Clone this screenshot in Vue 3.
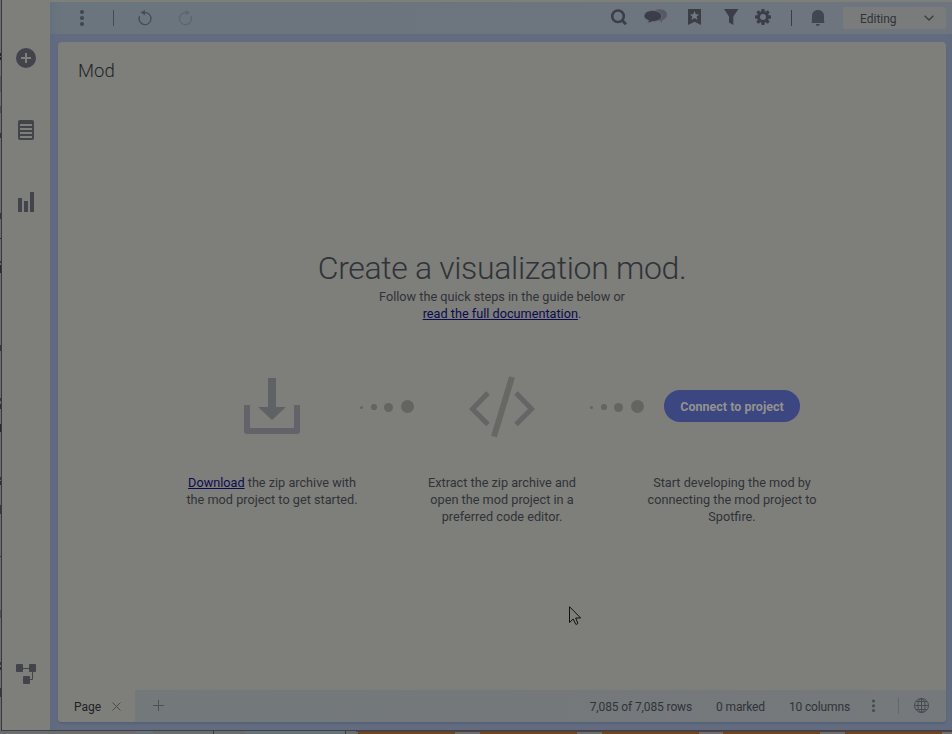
<script setup>
const marks = [
  [53, 3, 1], [57, 3, 1], [76, 16, .25], [106, 7, .4], [133, 5, .8], [213, 6, .8], [238, 1, 1], [261, 2, .8], [265, 8, 1], [345, 6, .8],
  [398, 3, .8], [404, 5, .9], [424, 8, 1], [477, 3, .8], [481, 4, .9], [505, 9, .8], [556, 1, .8], [610, 8, .4], [662, 3, .8], [667, 3, .9], [688, 9, .8]
]
const bars = [358, 480, 602, 723, 845]
const teeth = [0, 45, 90, 135, 180, 225, 270, 315]
</script>

<template>
  <div class="screen">
    <svg class="edge" width="1" height="734" aria-hidden="true">
      <rect v-for="m in marks" :key="m[0]" x="0" :y="m[0]" width="1" :height="m[1]" fill="#29292c" :opacity="m[2]" />
    </svg>
    <div class="window">
      <aside class="side">
        <svg class="i-add" width="20" height="20" viewBox="0 0 20 20"><circle cx="10" cy="10" r="10" fill="#42434b" /><path d="M10 5v10M5 10h10" stroke="#7e7e7b" stroke-width="2" /></svg>
        <svg class="i-list" width="16" height="20" viewBox="0 0 16 20"><rect width="16" height="20" rx="2" fill="#42434b" /><path d="M2 5h12M2 9h12M2 13h12M2 17h12" stroke="#7e7e7b" stroke-width="2" /></svg>
        <svg class="i-bars" width="16" height="20" viewBox="0 0 16 20"><path d="M0 6h4v14H0zM6 9h4v11H6zM12 0h4v20h-4z" fill="#42434b" /></svg>
        <svg class="i-flow" width="20" height="20" viewBox="0 0 20 20"><path d="M7 4.500h6M16.500 8v7.500h-3" fill="none" stroke="#42434b" stroke-width="1" /><g fill="#42434b"><rect width="7" height="8" rx="1" /><rect x="13" width="7" height="8" rx="1" /><rect x="7" y="12" width="7" height="8" rx="1" /></g></svg>
      </aside>
      <div class="workspace">
        <header class="toolbar">
          <svg class="tools" width="160" height="32" viewBox="0 0 160 32">
            <g fill="#42464f"><circle cx="32" cy="10" r="2.100" /><circle cx="32" cy="16" r="2.100" /><circle cx="32" cy="22" r="2.100" /></g>
            <path d="M63.500 8v16" stroke="#424a5d" />
            <path d="M89.600 14A6 6 0 1 0 95 10.600" fill="none" stroke="#484c55" stroke-width="1.300" /><path d="M90.500 10.600L95 8v5.300z" fill="#484c55" />
            <g opacity=".38"><path d="M140.900 14A6 6 0 1 1 135.500 10.600" fill="none" stroke="#484c55" stroke-width="1.300" /><path d="M140.200 10.600L135.500 8v5.300z" fill="#484c55" /></g>
          </svg>
          <div class="right-tools">
            <svg width="230" height="32" viewBox="600 2 230 32">
              <circle cx="618" cy="16.200" r="5.800" fill="none" stroke="#3b3e47" stroke-width="2.500" /><path d="M622 20.300l4 4" stroke="#3b3e47" stroke-width="2.800" />
              <path d="M656 9.700c6-1.500 11 .8 11 5.100 0 2.500-1.800 4.300-4.600 5.300l-.7 2.400-2.200-2.100h-2z" fill="#555a63" />
              <path d="M652.500 10.500c5.300 0 9.200 2.400 9.200 5.600s-3.800 5.500-9 5.500l-5 1.600.9-2.600c-2.800-1.100-4.600-2.500-4.600-4.500 0-3.200 3.700-5.600 8.500-5.600z" fill="#3b3e47" stroke="#6e757e" stroke-width=".7" />
              <path d="M688 9h13v16l-6.500-3.300L688 25z" fill="#3b3e47" /><path d="M694.500 11l1.300 3.300 3.500.1-2.700 2.200.9 3.400-3-1.900-3 1.900.9-3.400-2.700-2.200 3.500-.1z" fill="#727981" />
              <path d="M724 9h14.500l-5.200 7.500V25l-4.300-2.500v-6z" fill="#3b3e47" />
              <circle cx="763" cy="17" r="4.400" fill="none" stroke="#3b3e47" stroke-width="2.800" />
              <path v-for="t in teeth" :key="t" d="M761.600 9h2.800l.5 3h-3.800z" fill="#3b3e47" :transform="`rotate(${t} 763 17)`" />
              <path d="M791.500 10v16" stroke="#3b3e47" /><path d="M811.500 23c.3-1.200.5-2 .5-3.500V16c0-3.500 2.300-6 6-6s6 2.500 6 6v3.500c0 1.500.2 2.300.5 3.500zM815.600 24h4.200q-.3 2-2.100 2t-2.100-2z" fill="#42464f" />
            </svg>
            <button class="mode"><span>Editing</span><svg width="10" height="6" viewBox="0 0 10 6"><path d="M.6.7L5 5 9.400.7" fill="none" stroke="#3d4045" stroke-width="1.500" /></svg></button>
          </div>
        </header>
        <main class="card">
          <h2>Mod</h2>
          <section class="intro">
            <h1>Create a visualization mod.</h1>
            <p>Follow the quick steps in the guide below or<br><a>read the full documentation</a>.</p>
          </section>
          <section class="steps">
            <div class="step">
              <div class="art"><svg width="56" height="56" viewBox="0 0 56 56"><path d="M24 0h8v29h10L28 42 14 29h10z" fill="#5f6265" /><path d="M0 27h6v23h44V27h6v26q0 3-3 3H3q-3 0-3-3z" fill="#626268" /></svg></div>
              <p><a>Download</a> the zip archive with<br>the mod project to get started.</p>
            </div>
            <svg class="dots" width="56" height="16" viewBox="0 0 56 16"><g fill="#646462"><circle cx="2.500" cy="8.500" r="1.500" /><circle cx="15" cy="8" r="3.100" /><circle cx="29.500" cy="8.500" r="4.500" /><circle cx="48.500" cy="7.500" r="6.500" /></g></svg>
            <div class="step">
              <div class="art"><svg class="code" width="66" height="62" viewBox="0 0 66 62"><g fill="none" stroke="#656566" stroke-width="5"><path d="M19 17L3.500 33 19 48.500M47 17L62.500 33 47 48.500" /><path d="M43 1L25 60.500" stroke="#676765" stroke-width="6" /></g></svg></div>
              <p>Extract the zip archive and<br>open the mod project in a<br>preferred code editor.</p>
            </div>
            <svg class="dots" width="56" height="16" viewBox="0 0 56 16"><g fill="#646462"><circle cx="2.500" cy="8.500" r="1.500" /><circle cx="15" cy="8" r="3.100" /><circle cx="29.500" cy="8.500" r="4.500" /><circle cx="48.500" cy="7.500" r="6.500" /></g></svg>
            <div class="step">
              <div class="art"><button class="connect">Connect to project</button></div>
              <p>Start developing the mod by<br>connecting the mod project to<br>Spotfire.</p>
            </div>
          </section>
          <footer class="status">
            <div class="tab"><span>Page</span><svg width="9" height="9" viewBox="0 0 9 9"><path d="M.5.5l8 8M8.500.5l-8 8" stroke="#494a4c" /></svg></div>
            <svg class="plus" width="11" height="11" viewBox="0 0 11 11"><path d="M5.500 0v11M0 5.500h11" stroke="#4b5055" /></svg>
            <span class="rows">7,085 of 7,085 rows</span><span class="marked">0 marked</span><span class="columns">10 columns</span>
            <svg class="end" width="76" height="32" viewBox="0 0 76 32"><g fill="#484c50"><circle cx="3.500" cy="11" r="1.600" /><circle cx="3.500" cy="15.800" r="1.600" /><circle cx="3.500" cy="20.600" r="1.600" /></g><path d="M28.500 8v16" stroke="#60676e" /><g fill="none" stroke="#464b50"><circle cx="51.500" cy="15.500" r="7" /><ellipse cx="51.500" cy="15.500" rx="3.600" ry="7" /><path d="M51.500 8.500v14M44.500 15.500h14M46 11.500h11M46 19.500h11" /></g></svg>
          </footer>
        </main>
      </div>
    </div>
    <svg class="under" width="952" height="3" aria-hidden="true">
      <path d="M0 0h952v3H0z" fill="#6b6c6d" /><path d="M136 0h17v3h-17zM245 0h100v3H245z" fill="#697179" /><path d="M213.500 0v3M345.500 0v3" stroke="#383b40" />
      <rect v-for="x in bars" :key="x" :x="x" y="0" width="97" height="3" fill="#70441f" /><path d="M356 .5h596" stroke="#54423c" />
    </svg>
    <svg class="cursor" width="13" height="20" viewBox="0 0 13 20"><path d="M.5.700V16.500l3.700-3.500 2.500 5.200q1.300.5 2.200-.8L6.700 12h5z" fill="#7e7e7b" stroke="#111113" /></svg>
  </div>
</template>

<style>
html, body { margin: 0; background: #6b6c6d; overflow: hidden; }
</style>
<style scoped>
* { box-sizing: border-box; }
.screen { position: relative; width: 952px; height: 734px; display: grid; grid-template-columns: 1px 951px; grid-template-rows: 731px 3px; background: #6d6d70; font: 12px/17px Roboto, sans-serif; color: #303338; overflow: hidden; }
svg { display: block; flex: none; }
button { border: 0; font: inherit; color: inherit; padding: 0; }
h1, h2, p { margin: 0; font-weight: 400; }
.edge { grid-row: 1 / 3; grid-column: 1; }
.window { grid-row: 1; grid-column: 2; display: flex; border-left: 1px solid #38393e; border-bottom: 1px solid #3e4148; background: #7e7e7b; }
.under { grid-row: 2; grid-column: 1 / 3; }
.side { width: 48px; height: 730px; padding: 48px 0 46px; display: flex; flex-direction: column; align-items: center; gap: 52px; }
.i-flow { margin-top: auto; }
.workspace { flex: 1; margin-top: 2px; background: linear-gradient(90deg, #5e6a7d 0, #636b80 8px, #636b80 894px, #5f6b7d 902px); }
.toolbar { height: 32px; background: linear-gradient(90deg, #65717d 0, #6b757e 12px, #6e757e); display: flex; justify-content: space-between; }
.right-tools { display: flex; align-items: center; padding-right: 6px; }
.right-tools > svg { margin-right: 13px; }
.mode { width: 103px; height: 22px; border-radius: 2px; background: #7a7c7b; display: flex; align-items: center; justify-content: space-between; padding: 1px 12px 0 17px; }
.mode span { padding-top: 1px; }
.mode svg { margin-bottom: 1px; }
.card { margin: 8px 6px 8px 8px; width: 888px; height: 680px; border-radius: 4px; background: #7e7e7b; display: flex; flex-direction: column; overflow: hidden; box-shadow: 0 2px 2px #556276; }
h2 { margin: 17px 0 0 20px; font-size: 18.500px; line-height: 24px; font-weight: 300; color: #222429; }
.intro { margin-top: 165px; text-align: center; }
h1 { font-size: 32px; line-height: 40px; font-weight: 300; letter-spacing: -.34px; color: #303338; }
.intro p, .step p { font-size: 12.700px; line-height: 17px; white-space: nowrap; }
a { color: #0b0b50; text-decoration: underline; }
.steps { display: grid; grid-template-columns: 174px 56px 174px 56px 174px; justify-content: center; margin-top: 45px; }
.step { text-align: center; }
.art { height: 78px; display: flex; align-items: center; justify-content: center; }
.code { margin-top: 1px; }
.step p { margin-top: 29px; }
.dots { margin-top: 32px; }
.connect { width: 136px; height: 32px; border-radius: 16px; background: #3c4680; color: #92938f; font-weight: 700; font-size: 12.500px; }
.status { margin-top: auto; height: 32px; background: linear-gradient(90deg, #73787b, #75797c); display: flex; align-items: center; white-space: nowrap; }
.status span { padding-top: 2px; }
.tab { width: 77px; height: 32px; display: flex; align-items: center; justify-content: space-between; padding: 0 14px 0 16px; color: #202226; background: #7e7e7b; }
.plus { margin: 0 0 1px 18px; }
.rows { margin-left: auto; letter-spacing: -.12px; }
.marked, .columns { margin-left: 24px; letter-spacing: -.14px; }
.end { margin-left: 20px; }
.cursor { position: absolute; left: 569px; top: 606px; }
</style>
